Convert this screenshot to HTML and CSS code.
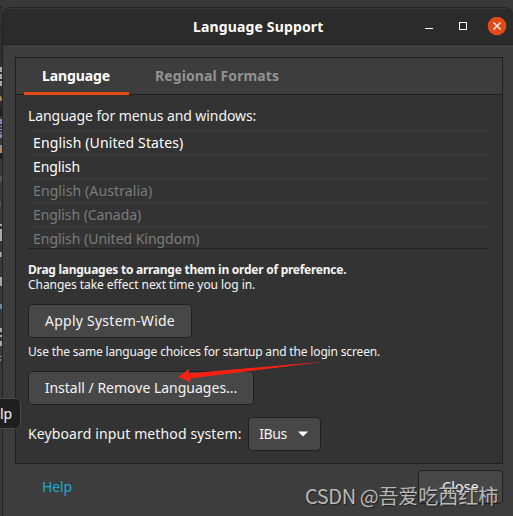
FILE: index.html
```html
<!DOCTYPE html>
<html lang="en">
<head>
<meta charset="utf-8">
<title>Language Support</title>
<link rel="stylesheet" href="styles.css">
</head>
<body>
<svg class="backdrop" width="3" height="516" shape-rendering="crispEdges">
  <path fill="#303030" d="M0 7h2v109H0z"/>
  <path fill="#222" d="M0 6h3v1H0zM0 30h2v1H0zM0 54h2v1H0zM0 107h2v9H0zM0 145h2v14H0z"/>
  <path fill="#733" d="M0 20h1v1H0z"/>
  <path fill="#aaa" d="M0 67h2v5H0zM0 74h2v5H0zM0 81h2v5H0z"/>
  <path fill="#a58c5a" d="M0 96h1v5H0z"/>
  <path fill="#567b99" d="M1 97h1v4H1z"/>
  <path fill="#7d88c4" d="M0 119h2v5H0zM0 126h2v1H0zM0 129h2v1H0zM0 132h2v1H0zM0 134h2v4H0z"/>
  <path fill="#7799a8" d="M0 145h2v2H0zM1 147h1v6H1z"/>
  <path fill="#b58a62" d="M0 147h1v6H0z"/>
  <path fill="#555" d="M0 176h2v6H0zM0 201h1v5H0z"/>
  <path fill="#aaa" d="M0 224h2v2H0zM0 229h2v12H0zM0 252h1v5H0zM0 277h2v9H0zM0 328h2v4H0zM0 335h2v2H0zM0 341h2v5H0z"/>
  <path fill="#678ba0" d="M0 304h2v5H0zM1 252h1v5H1z"/>
  <path fill="#888" d="M0 356h2v1H0zM0 359h1v2H0z"/>
</svg>
<main class="window">
  <header class="titlebar">
    <h1 class="title">Language Support</h1>
    <svg class="controls" width="82" height="20" viewBox="0 0 82 20">
      <path d="M0 11.500h8" stroke="#fff"/>
      <rect x="34.500" y="5.500" width="7" height="7" fill="none" stroke="#fff"/>
      <circle cx="72" cy="9" r="9.300" fill="#e24b17"/>
      <path d="M68.500 5.500l7 7m0-7l-7 7" stroke="#fff" stroke-width="1.300"/>
    </svg>
  </header>
  <section class="notebook">
    <nav class="tabs">
      <span class="tab active">Language</span>
      <span class="tab regional">Regional Formats</span>
    </nav>
    <div class="page">
      <p class="label">Language for menus and windows:</p>
      <ul class="languages">
        <li class="us">English (United States)</li>
        <li>English</li>
        <li class="dim au">English (Australia)</li>
        <li class="dim">English (Canada)</li>
        <li class="dim uk">English (United Kingdom)</li>
      </ul>
      <p class="note strong">Drag languages to arrange them in order of preference.</p>
      <p class="note">Changes take effect next time you log in.</p>
      <button class="button apply">Apply System-Wide</button>
      <p class="note startup">Use the same language choices for startup and the login screen.</p>
      <button class="button install">Install / Remove Languages...</button>
      <div class="input-row">
        <span class="method">Keyboard input method system:</span>
        <button class="button select">IBus
          <svg width="10" height="6" viewBox="0 0 10 6"><path d="M0 .5h10L5 5.500z" fill="#fff"/></svg>
        </button>
      </div>
    </div>
  </section>
  <footer class="actions">
    <a class="help">Help</a>
    <button class="button close">Close</button>
  </footer>
</main>
<div class="tooltip">lp</div>
<svg class="arrow" width="150" height="24" viewBox="0 0 150 24"><path d="M1 17L12.500 9l-1 4.500L149 1.500 13 18.500l1 3.500z" fill="#ff2014"/></svg>
<div class="watermark"><span class="latin">CSDN @</span>吾爱吃西红柿</div>
</body>
</html>
```
FILE: styles.css
```css
* { box-sizing: border-box; }
body {
  margin: 0;
  height: 516px;
  overflow: hidden;
  position: relative;
  background: #393939;
  color: #f3f3f3;
  font: 14px/20px "Noto Sans", sans-serif;
}
p, ul, h1 { margin: 0; padding: 0; }
.backdrop { position: absolute; left: 0; top: 0; }
.window {
  position: relative;
  height: 509px;
  margin: 7px 0 0 2px;
  border-left: 1px solid #222;
  border-top: 1px solid #222;
  border-radius: 9px 8px 0 0;
  background: #3d3d3d;
  overflow: hidden;
}
.titlebar {
  height: 37px;
  display: flex;
  align-items: center;
  justify-content: flex-end;
  padding-right: 6px;
  background: #2b2b2b;
  border-top: 1px solid #383838;
  border-bottom: 1px solid #222;
}
.title {
  flex: 1;
  padding-left: 190px;
  color: #fff;
  font-size: 14px;
  font-weight: 700;
  letter-spacing: .15px;
  white-space: nowrap;
}
.controls { flex: none; margin-top: 1px; }
.notebook {
  width: 488px;
  height: 407px;
  margin: 12px 0 0 12px;
  border: 1px solid #202020;
  background: #333;
}
.tabs {
  display: flex;
  height: 37px;
  padding-left: 8px;
  background: #3d3d3d;
  border-bottom: 1px solid #202020;
}
.tab {
  height: 37px;
  padding: 8px 18px 0;
  font-weight: 700;
  color: #929292;
  white-space: nowrap;
}
.active {
  width: 105px;
  color: #fff;
  letter-spacing: -.11px;
  border-bottom: 3px solid #e24b17;
}
.regional { margin-left: 8px; letter-spacing: .1px; }
.page { padding: 11px 14px 0 12px; white-space: nowrap; }
.label { height: 25px; letter-spacing: -.08px; }
.languages {
  height: 118px;
  overflow: hidden;
  list-style: none;
  color: #fff;
  border-bottom: 1px solid #222;
}
.languages li {
  height: 24px;
  padding: 0 0 0 5px;
  line-height: 22px;
  border-top: 1px solid #3d3d3d;
  letter-spacing: -.08px;
}
.languages .dim { color: #7b7b7b; }
.languages .us { letter-spacing: .12px; }
.languages .au { letter-spacing: .1px; }
.languages .uk { letter-spacing: -.03px; }
.note { font-size: 12px; line-height: 15px; letter-spacing: -.05px; }
.strong { margin-top: 13px; font-weight: 700; letter-spacing: -.26px; }
.button {
  display: block;
  height: 34px;
  padding: 0;
  border: 1px solid #202020;
  border-radius: 4px;
  background: #474747;
  color: #f3f3f3;
  font: 14px/30px "Noto Sans", sans-serif;
  text-align: center;
  white-space: nowrap;
}
.apply { width: 164px; margin-top: 12px; letter-spacing: .25px; }
.startup { margin-top: 6px; letter-spacing: -.16px; }
.install { width: 226px; margin-top: 12px; }
.input-row { display: flex; align-items: center; margin-top: 12px; }
.method { width: 220px; letter-spacing: .12px; }
.select {
  width: 73px;
  display: flex;
  align-items: center;
  justify-content: center;
  gap: 11px;
  padding-right: 2px;
  letter-spacing: -.4px;
}
.actions {
  display: flex;
  justify-content: space-between;
  margin: 6px 10px 0 39px;
}
.help { padding-top: 7px; color: #19a9d5; letter-spacing: -.1px; }
.close { width: 85px; letter-spacing: .29px; }
.tooltip {
  position: absolute;
  left: -10px;
  top: 398px;
  width: 31px;
  height: 31px;
  padding: 5px 0 0 9px;
  border: 1px solid #494949;
  border-radius: 6px;
  background: #1f1f1f;
}
.arrow { position: absolute; left: 177px; top: 360px; }
.watermark {
  position: absolute;
  left: 305px;
  top: 481px;
  font: 400 20px/30px "Noto Sans CJK SC", sans-serif;
  color: #b8b8b8;
  text-shadow: 1px 1px 1px #222;
  white-space: nowrap;
}
.latin { letter-spacing: -.4px; }
```
